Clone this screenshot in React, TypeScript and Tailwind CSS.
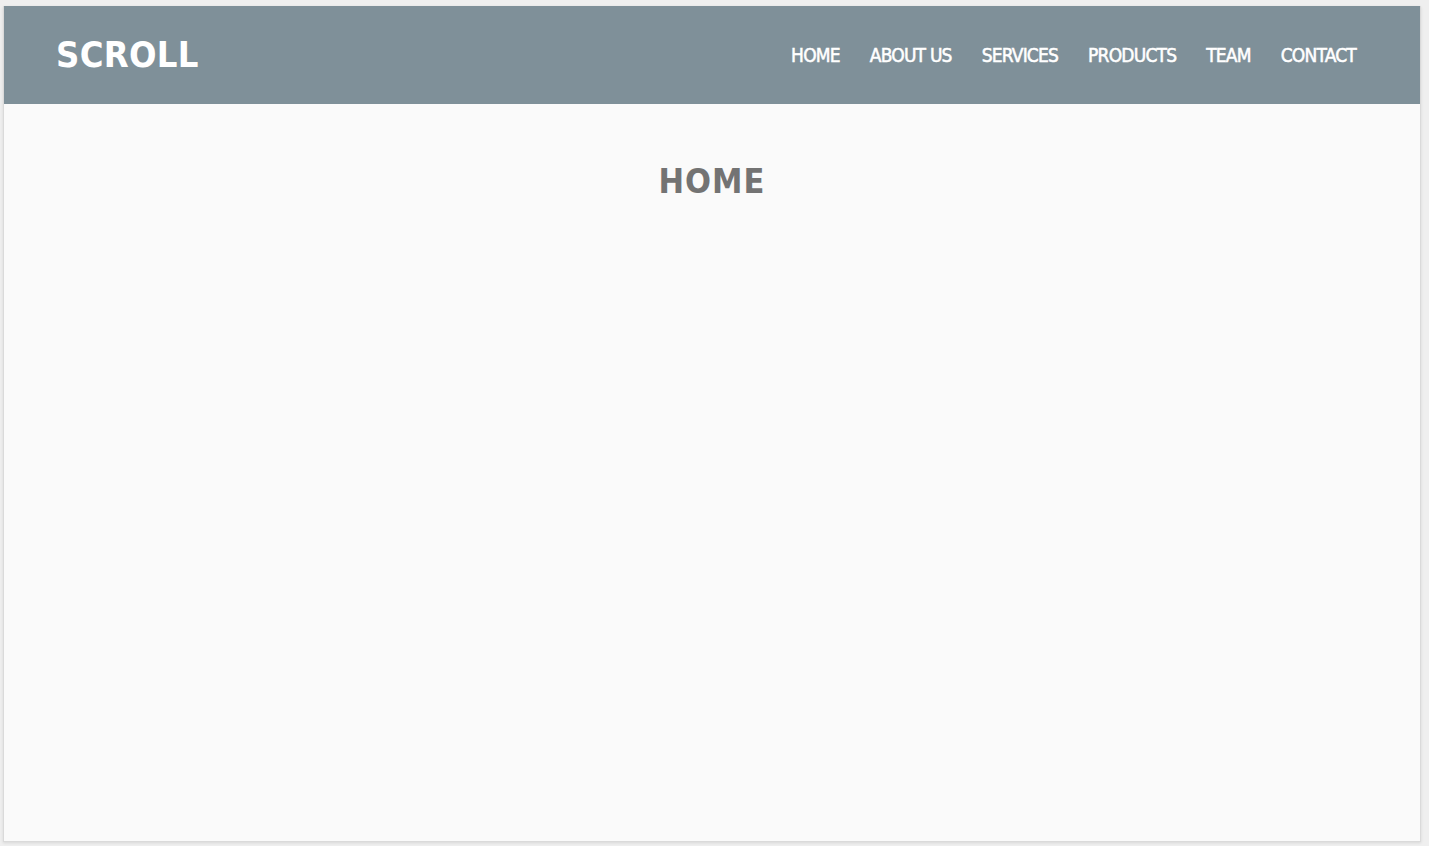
import React from "react";

const links = ["HOME", "ABOUT US", "SERVICES", "PRODUCTS", "TEAM", "CONTACT"];

const font = {
  fontFamily: '"DejaVu Sans Condensed", "DejaVu Sans", "Liberation Sans", sans-serif',
};

export default function App() {
  return (
    <div
      className="min-h-screen flex flex-col bg-[#efefef] pt-[6px] pl-[3px] pr-[8px] pb-[4px]"
      style={font}
    >
      <div className="flex-1 flex flex-col bg-[#fafafa] border-l border-r border-b border-[#dadada] shadow-[0_1px_3px_rgba(0,0,0,0.1)]">
        {/* barre du haut */}
        <header className="h-[98px] flex items-center justify-between bg-[#7f9099] pl-[52px] pr-[64px]">
          <div className="text-white text-[36px] font-bold tracking-[0.3px] leading-none">SCROLL</div>
          <nav className="flex items-center gap-[30px]">
            {links.map((l) => (
              <a
                key={l}
                href="#"
                className="text-white text-[19px] font-normal leading-none tracking-[-0.8px] [-webkit-text-stroke:0.5px_white]"
              >
                {l}
              </a>
            ))}
          </nav>
        </header>

        {/* contenu */}
        <main className="flex-1 flex justify-center pt-[60px]">
          <h1 className="text-[#737373] text-[34px] font-bold tracking-[1px] leading-none">HOME</h1>
        </main>
      </div>
    </div>
  );
}
